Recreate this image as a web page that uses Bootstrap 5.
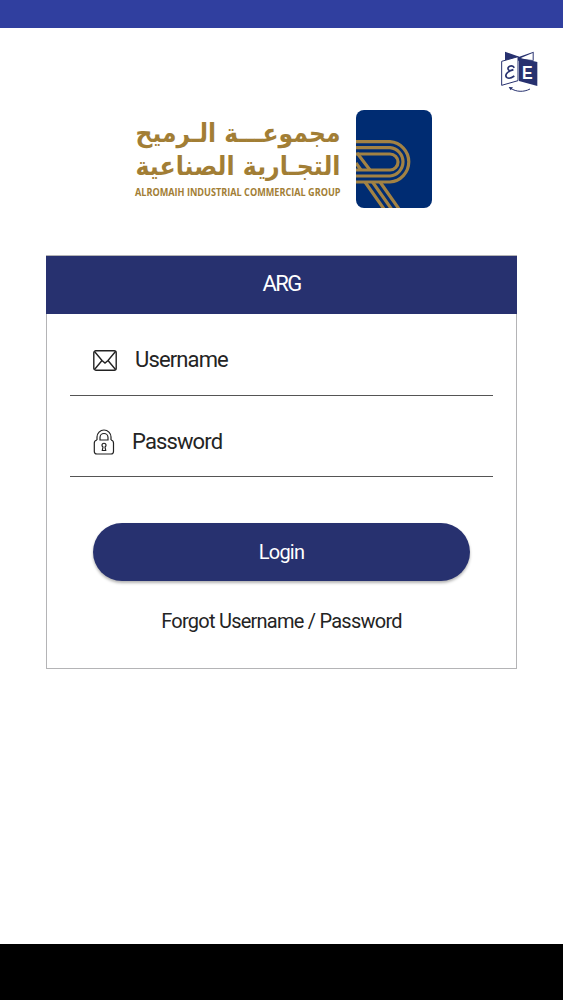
<!DOCTYPE html>
<html lang="en">
<head>
<meta charset="utf-8">
<meta name="viewport" content="width=device-width, initial-scale=1">
<title>ARG</title>
<link href="https://cdn.jsdelivr.net/npm/bootstrap@5.3.0/dist/css/bootstrap.min.css" rel="stylesheet">
<style>
body{font-family:Roboto,"Noto Sans",sans-serif;color:#242424;height:1000px;overflow:hidden}
.status{height:27.5px;background:#303f9f}
.sysbar{height:56px;background:#000}
.lang{width:40px;height:42px;margin:22.5px 23px 0 0}
.brand{height:98px;margin:18px 131px 0 131px}
.login{margin:47px 46px 0 46px;height:414px;border:1px solid #b4b4b6;border-radius:0}
.login .login-title{height:58px;margin:0 -1px;background:#27316f;border-radius:0;border:0;font-size:22px;line-height:55px;letter-spacing:-1.6px}
.field{height:81.5px;margin:0 23px;border-bottom:1px solid #555;padding:12px 0 0 23px}
.field input{font-size:22px;line-height:30px;color:#242424;height:30px;letter-spacing:-.87px}
.field input::placeholder{color:#242424;opacity:1}
.go{height:58px;margin:46px 46px 0;background:#27316f;font-size:20px;letter-spacing:-.8px;box-shadow:0 2px 3px rgba(0,0,0,.3)}
.go:hover{background:#27316f}
.forgot{font-size:20px;line-height:30px;margin-top:25px;letter-spacing:-.76px;color:#242424}
.wordmark{overflow:visible}
</style>
</head>
<body class="d-flex flex-column bg-white">
<header class="status"></header>
<main class="flex-grow-1 d-flex flex-column">
  <a href="#" class="lang align-self-end" aria-label="Language">
    <svg class="d-block" width="40" height="42" viewBox="30 30 120 126">
      <path d="M45 35L88 50L131 35V62H45Z" fill="#27316f"/>
      <path d="M94 53L128 39V60L94 57Z" fill="#fff"/>
      <path d="M35 64L84 50V122L35 136Z" fill="#fff" stroke="#27316f" stroke-width="3"/>
      <path d="M87 53V123L142 138V66Z" fill="#27316f"/>
      <text x="96" y="118" font-family="Liberation Sans" font-weight="700" font-size="53" textLength="32" lengthAdjust="spacingAndGlyphs" fill="#fff">E</text>
      <path d="M73 83C65 72 50 80 55 89Q58 95 70 89C50 94 43 107 51 113Q59 118 73 108" fill="none" stroke="#27316f" stroke-width="5"/>
      <path d="M62 145C79 156 101 157 120 147" fill="none" stroke="#27316f" stroke-width="3"/>
      <path d="M56 141L69 142L62 151Z" fill="#27316f"/>
    </svg>
  </a>
  <div class="brand d-flex justify-content-between">
    <svg class="wordmark" width="216" height="98" viewBox="-4 0 216 98" fill="#a27e35" font-weight="700">
      <g font-family="DejaVu Sans" font-size="26">
        <text x="205.5" y="32" direction="rtl" textLength="205" lengthAdjust="spacingAndGlyphs">مجموعـــة الـرميح</text>
        <text x="205.5" y="65" direction="rtl" textLength="205" lengthAdjust="spacingAndGlyphs">التجـارية الصناعية</text>
      </g>
      <text x="0" y="85.5" font-family="Open Sans" font-size="10" textLength="205.5" lengthAdjust="spacingAndGlyphs">ALROMAIH INDUSTRIAL COMMERCIAL GROUP</text>
    </svg>
    <svg width="76" height="98" viewBox="0 0 76 98">
      <defs><clipPath id="tile"><rect width="76" height="98" rx="8"/></clipPath></defs>
      <g clip-path="url(#tile)">
        <rect width="76" height="98" fill="#002c72"/>
        <g fill="none" stroke="#a28244" stroke-width="3.2">
          <path d="M0 31.7H34A20.2 20.2 0 0 1 34 72H0M0 37.7H34A14.2 14.2 0 0 1 34 66H0M0 44H34A8 8 0 0 1 34 60H0"/>
          <path d="M1 43L14 60M0 53L5 60M9 72L28 99M16.5 72L35.5 99M24 72L43 99"/>
        </g>
      </g>
    </svg>
  </div>
  <form class="login card">
    <div class="login-title card-header text-center text-white p-0">ARG</div>
    <label class="field d-flex align-items-center">
      <svg width="24" height="21" viewBox="0 0 24 21" fill="none" stroke="#222" stroke-width="1.4">
        <rect x=".8" y=".8" width="22.4" height="19.4" rx="2"/>
        <path d="M1.5 1.5L9 10.5L12 13L15 10.5L22.5 1.5M1.5 19.5L9 10.5M22.5 19.5L15 10.5"/>
      </svg>
      <input class="border-0 p-0 bg-transparent" style="margin-left:18px;width:280px" placeholder="Username">
    </label>
    <label class="field d-flex align-items-center">
      <svg width="22" height="26" viewBox="0 0 22 26" fill="none" stroke="#222" stroke-width="1.2">
        <path d="M4 11V8A7 7 0 0 1 18 8V11M7 11V8.5A4 4 0 0 1 15 8.5V11Z"/>
        <path d="M4 11Q1.3 11.5 1.3 14V22.5Q1.3 25 4 25H18Q20.5 25 20.5 22.5V14Q20.5 11.5 18 11"/>
        <path d="M10 18A2 2 0 1 1 12 18L12.7 21.5H9.3Z"/>
      </svg>
      <input type="password" class="border-0 p-0 bg-transparent" style="margin-left:17px;width:280px" placeholder="Password">
    </label>
    <button type="button" class="go btn rounded-pill text-white border-0 p-0">Login</button>
    <a href="#" class="forgot text-center text-decoration-none">Forgot Username / Password</a>
  </form>
</main>
<footer class="sysbar"></footer>
<script src="https://cdn.jsdelivr.net/npm/bootstrap@5.3.0/dist/js/bootstrap.bundle.min.js"></script>
</body>
</html>
